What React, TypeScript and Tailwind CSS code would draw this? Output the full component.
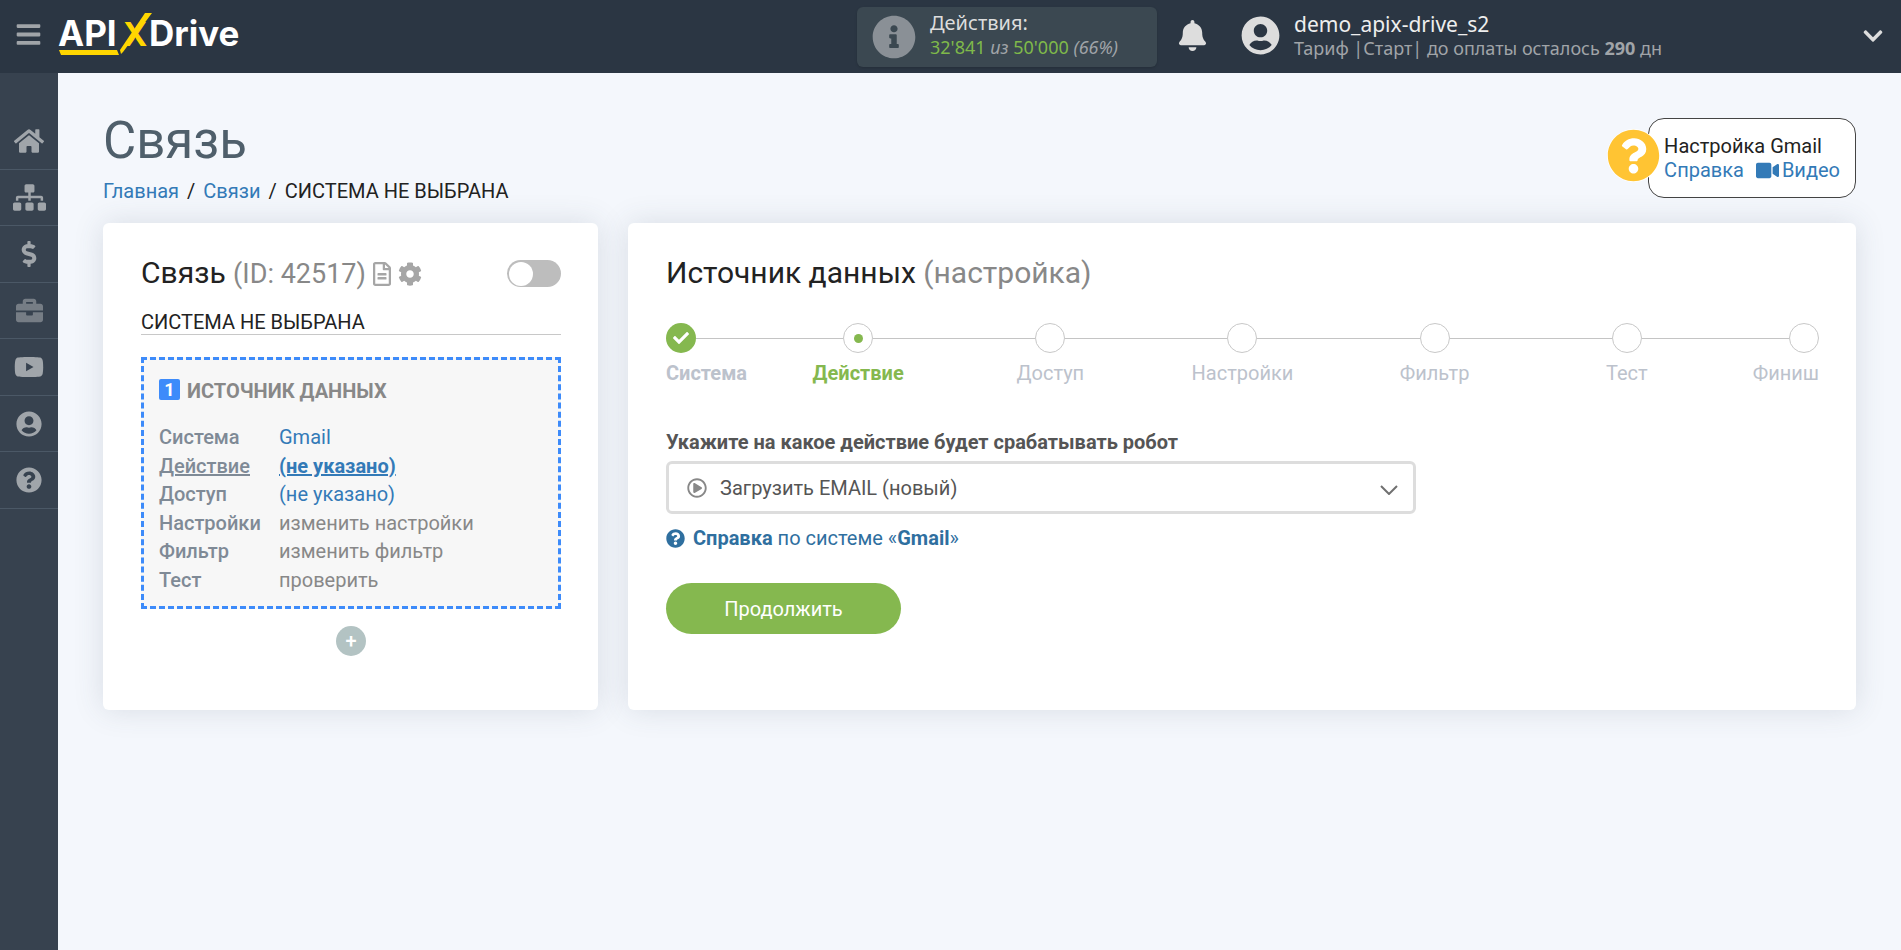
import React from 'react';
import {
  FaBars,
  FaBell,
  FaBriefcase,
  FaCheck,
  FaChevronDown,
  FaCog,
  FaDollarSign,
  FaHome,
  FaInfoCircle,
  FaQuestionCircle,
  FaRegFileAlt,
  FaRegPlayCircle,
  FaSitemap,
  FaUserCircle,
  FaVideo,
  FaYoutube,
} from 'react-icons/fa';

const menu = [
  { label: 'Главная', icon: <FaHome size={30} /> },
  { label: 'Связи', icon: <FaSitemap size={33} /> },
  { label: 'Оплата', icon: <FaDollarSign size={26} /> },
  { label: 'Услуги', icon: <FaBriefcase size={27} className="opacity-60" /> },
  { label: 'Видео', icon: <FaYoutube size={30} /> },
  { label: 'Профиль', icon: <FaUserCircle size={26} /> },
  { label: 'Помощь', icon: <FaQuestionCircle size={26} /> },
];

const steps = ['Система', 'Действие', 'Доступ', 'Настройки', 'Фильтр', 'Тест', 'Финиш'];

const Logo = () => (
  <svg width="190" height="50" viewBox="0 0 190 50" role="img" aria-label="APIXDrive">
    <g fontFamily="Inter, sans-serif" fontWeight="700" fill="#fff">
      <text x="0" y="34" fontSize="35">API</text>
      <text x="65" y="34" fontSize="33" fill="#ffd600">X</text>
      <text x="91" y="34" fontSize="35">Drive</text>
    </g>
    <polygon points="87,1 94,1 65,40 63,42 62,38" fill="#ffd600" />
    <polygon points="1,38 59,38 61,43 3,43" fill="#ffd600" />
  </svg>
);

const Header = () => (
  <header className="flex h-[73px] items-center bg-[#2b3643] font-['Noto_Sans',sans-serif]">
    <button type="button" aria-label="Меню" className="ml-[15px] pb-1 text-[#a0a4a8]">
      <FaBars size={27} />
    </button>
    <a href="#" className="ml-4">
      <Logo />
    </a>

    <div className="ml-auto flex h-[60px] w-[300px] items-center rounded-md bg-[#3b4851] pl-[15px] shadow-sm">
      <FaInfoCircle size={44} className="text-[#8a9096]" />
      <div className="ml-[14px] pb-1">
        <p className="text-xl leading-6 text-[#dddddd]">Действия:</p>
        <p className="text-lg leading-6 text-[#a0a4a8]">
          <span className="text-[#7fb94a]">32'841</span> <i>из</i> <span className="text-[#7fb94a]">50'000</span> <i>(66%)</i>
        </p>
      </div>
    </div>

    <button type="button" aria-label="Уведомления" className="ml-5 pb-0.5 text-[#dddddd]">
      <FaBell size={31} />
    </button>

    <button type="button" className="ml-[33px] mr-[17px] flex w-[643px] items-center pb-0.5 text-left">
      <FaUserCircle size={39} className="text-[#dddddd]" />
      <span className="ml-[14px]">
        <span className="block text-[21px] leading-6 text-[#eeeeee]">demo_apix-drive_s2</span>
        <span className="block text-lg leading-6 text-[#a0a4a8]">
          Тариф |Старт| до оплаты осталось <b>290</b> дн
        </span>
      </span>
      <FaChevronDown size={22} className="ml-auto text-[#dddddd]" />
    </button>
  </header>
);

const Sidebar = () => (
  <nav className="w-[58px] shrink-0 bg-[#37424f] pt-10">
    <ul className="grid min-h-[396px] auto-rows-fr">
      {menu.map((item) => (
        <li key={item.label} className="border-b border-[#4b5866]">
          <a href="#" aria-label={item.label} className="flex h-full items-center justify-center text-[#a0a5aa]">
            {item.icon}
          </a>
        </li>
      ))}
    </ul>
  </nav>
);

const HelpBox = () => (
  <div className="mt-[5px] flex items-start">
    <span className="z-10 -mr-3 mt-[11px] rounded-full bg-white">
      <FaQuestionCircle size={53} className="text-[#ffc433]" />
    </span>
    <div className="rounded-2xl border border-[#444444] bg-white px-[15px] py-[15px] leading-6">
      <p>Настройка Gmail</p>
      <p className="flex">
        <a href="#" className="text-[#337ab7]">Справка</a>
        <a href="#" className="ml-3 flex items-center gap-[3px] text-[#337ab7]">
          <FaVideo size={23} /> Видео
        </a>
      </p>
    </div>
  </div>
);

interface RowProps {
  label: string;
  value: string;
  link?: boolean;
  active?: boolean;
}

const Row: React.FC<RowProps> = ({ label, value, link, active }) => (
  <div className="flex items-center">
    <dt className={`w-[120px] shrink-0 font-medium text-[#7f8a96] ${active ? 'underline' : ''}`}>{label}</dt>
    <dd>
      <a href="#" className={`${link ? 'text-[#337ab7]' : 'text-[#888888]'} ${active ? 'font-bold underline' : ''}`}>
        {value}
      </a>
    </dd>
  </div>
);

const ConnectionCard = () => (
  <section className="rounded-md bg-white pb-[54px] pl-[38px] pr-[37px] pt-8 shadow-[0_0_30px_rgba(60,75,95,0.15)]">
    <div className="flex items-center">
      <h2 className="text-3xl leading-9">
        Связь <span className="text-[27px] text-[#888888]">(ID: 42517)</span>
      </h2>
      <button type="button" aria-label="Журнал" className="ml-1 text-[#a6a6a6]">
        <FaRegFileAlt size={24} />
      </button>
      <button type="button" aria-label="Настройки" className="ml-1 text-[#a6a6a6]">
        <FaCog size={24} />
      </button>
      <input
        type="checkbox"
        role="switch"
        aria-label="Включить связь"
        className="ml-auto flex h-[27px] w-[54px] appearance-none items-center rounded-full bg-[#bdbdbd] px-[2px] before:size-6 before:rounded-full before:bg-white before:content-[''] checked:justify-end"
      />
    </div>

    <input
      type="text"
      aria-label="Название связи"
      defaultValue="СИСТЕМА НЕ ВЫБРАНА"
      className="mt-[18px] block h-[25px] w-full border-b border-[#c8c8c8] outline-none"
    />

    <div className="mt-[22px] border-[3px] border-dashed border-[#3d8bfa] bg-[#f7f7f7] px-[15px] pb-3 pt-[17px]">
      <h3 className="flex items-start gap-[7px] font-bold leading-7 text-[#888888]">
        <span className="mt-0.5 flex size-[21px] items-center justify-center rounded-xs bg-[#3d8bfa] text-lg text-white">1</span>
        ИСТОЧНИК ДАННЫХ
      </h3>
      <dl className="mt-[18px] grid min-h-[171px] auto-rows-fr leading-7">
        <Row label="Система" value="Gmail" link />
        <Row label="Действие" value="(не указано)" link active />
        <Row label="Доступ" value="(не указано)" link />
        <Row label="Настройки" value="изменить настройки" />
        <Row label="Фильтр" value="изменить фильтр" />
        <Row label="Тест" value="проверить" />
      </dl>
    </div>

    <button
      type="button"
      aria-label="Добавить"
      className="mx-auto mt-[17px] flex size-[30px] items-center justify-center rounded-full bg-[#b3c3c3] font-medium text-white"
    >
      +
    </button>
  </section>
);

const Stepper = () => (
  <ol className="mt-8 flex">
    {steps.map((step, i) => {
      const first = i === 0;
      const last = i === steps.length - 1;
      const done = i < 1;
      const active = i === 1;

      return (
        <li
          key={step}
          className={`flex flex-col ${first || last ? 'w-1/12' : 'w-2/12 items-center'} ${last ? 'items-end' : ''}`}
        >
          <div className="flex w-full items-center">
            {!first && <span className="h-px flex-1 bg-[#c4c4c4]" />}
            <span
              className={`flex size-[30px] items-center justify-center rounded-full ${done ? 'bg-[#85b84f] text-white' : 'border border-[#c8c8c8] bg-white'}`}
            >
              {done && <FaCheck size={16} />}
              {active && <span className="size-[9px] rounded-full bg-[#85b84f]" />}
            </span>
            {!last && <span className="h-px flex-1 bg-[#c4c4c4]" />}
          </div>
          <span
            className={`mt-1.5 leading-7 ${active ? 'font-bold text-[#85b84f]' : 'text-[#bcc2cc]'} ${done ? 'font-bold' : ''}`}
          >
            {step}
          </span>
        </li>
      );
    })}
  </ol>
);

const SourceCard = () => (
  <section className="rounded-md bg-white pb-[54px] pl-[38px] pr-[37px] pt-8 shadow-[0_0_30px_rgba(60,75,95,0.15)]">
    <h2 className="text-3xl leading-9">
      Источник данных <span className="text-[#888888]">(настройка)</span>
    </h2>

    <Stepper />

    <form className="mt-[41px] max-w-[750px]">
      <label htmlFor="action" className="block font-bold leading-7 text-[#555555]">
        Укажите на какое действие будет срабатывать робот
      </label>
      <div className="relative mt-[5px]">
        <FaRegPlayCircle size={20} className="pointer-events-none absolute inset-y-0 left-[21px] my-auto text-[#888888]" />
        <select
          id="action"
          className="block h-[53px] w-full appearance-none rounded-md border-[3px] border-[#dddddd] bg-white pl-[51px] text-[#555555]"
        >
          <option>Загрузить EMAIL (новый)</option>
        </select>
        <svg
          width="18"
          height="10"
          viewBox="0 0 18 10"
          className="pointer-events-none absolute bottom-[19px] right-[18px]"
          fill="none"
          stroke="#707070"
          strokeWidth="2"
        >
          <path d="M1 1l8 8 8-8" />
        </svg>
      </div>

      <a href="#" className="mt-[10px] flex items-center leading-7 text-[#2f6f9f]">
        <FaQuestionCircle size={19} />
        <span className="ml-2">
          <b>Справка</b> по системе «<b>Gmail</b>»
        </span>
      </a>

      <button type="button" className="mt-[31px] h-[51px] w-[235px] rounded-full bg-[#85b84f] text-white">
        Продолжить
      </button>
    </form>
  </section>
);

export default function App() {
  return (
    <div className="flex min-h-screen flex-col bg-[#f4f7fc] font-[Roboto,sans-serif] text-xl text-[#222222]">
      <Header />
      <div className="flex flex-1">
        <Sidebar />
        <main className="min-w-0 flex-1 px-[45px] pt-10">
          <div className="flex items-start justify-between">
            <div>
              <h1 className="text-[51px] leading-14 text-[#4f5f6b]">Связь</h1>
              <ol className="mt-2 flex leading-7">
                <li><a href="#" className="text-[#337ab7]">Главная</a></li>
                <li className="px-2">/</li>
                <li><a href="#" className="text-[#337ab7]">Связи</a></li>
                <li className="px-2">/</li>
                <li>СИСТЕМА НЕ ВЫБРАНА</li>
              </ol>
            </div>
            <HelpBox />
          </div>

          <div className="mt-[18px] grid grid-cols-[495fr_1228fr] gap-[30px]">
            <ConnectionCard />
            <SourceCard />
          </div>
        </main>
      </div>
    </div>
  );
}
